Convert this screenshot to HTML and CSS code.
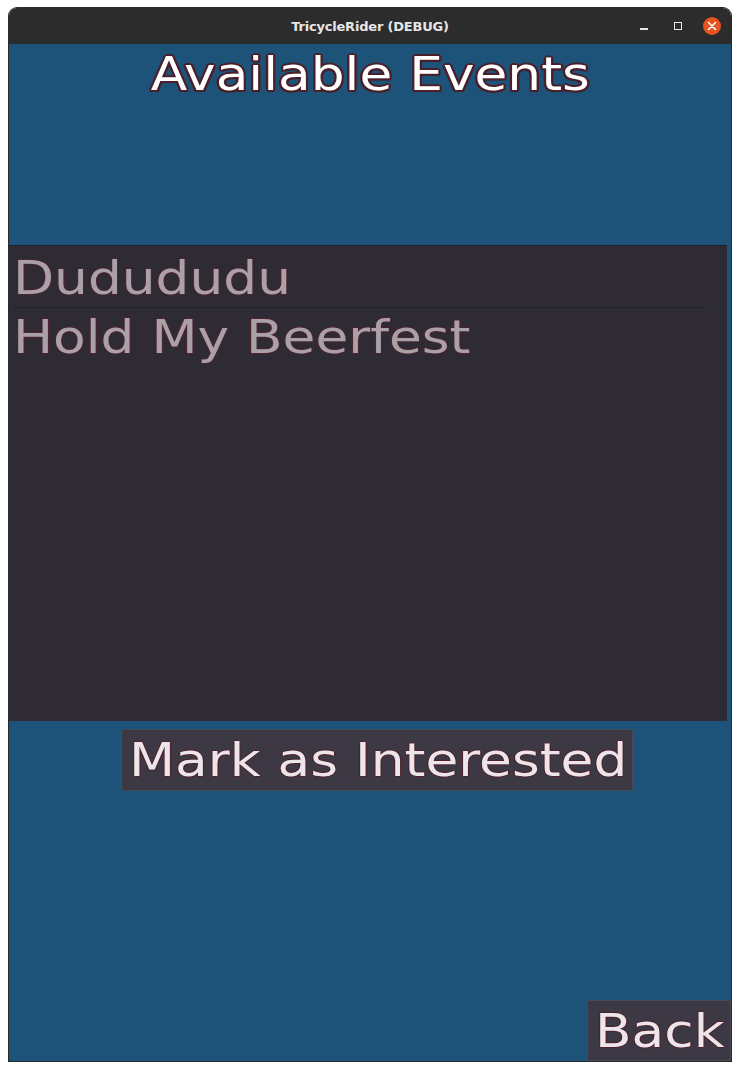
FILE: index.html
```html
<!DOCTYPE html>
<html>
<head>
<meta charset="utf-8">
<link rel="stylesheet" href="styles.css">
</head>
<body>
<div class="window">
  <div class="titlebar">
    <span class="title">TricycleRider (DEBUG)</span>
    <div class="controls">
      <span class="ctl min"></span>
      <span class="ctl max"></span>
      <span class="ctl close">
        <svg width="10" height="10" viewBox="0 0 10 10"><path d="M1.5 1.5L8.5 8.5M8.5 1.5L1.5 8.5" stroke="#fff" stroke-width="1.6" stroke-linecap="round"/></svg>
      </span>
    </div>
  </div>
  <div class="content">
    <header class="header">
      <h1 class="heading"><span class="wide center">Available Events</span></h1>
    </header>
    <div class="list">
      <div class="item"><span class="wide">Dudududu</span></div>
      <div class="sep"></div>
      <div class="item"><span class="wide">Hold My Beerfest</span></div>
    </div>
    <div class="actions">
      <button class="btn mark"><span class="wide">Mark as Interested</span></button>
    </div>
    <div class="footer">
      <button class="btn back"><span class="wide">Back</span></button>
    </div>
  </div>
</div>
</body>
</html>
```

FILE: styles.css
```css
html, body {
  margin: 0;
  padding: 0;
  background: #ffffff;
}
body {
  width: 740px;
  height: 1071px;
  overflow: hidden;
}
.window {
  margin: 8px 0 0 9px;
  width: 722px;
  height: 1053px;
  display: flex;
  flex-direction: column;
  border-radius: 8px 8px 0 0;
  overflow: hidden;
  box-shadow: 0 0 0 1px #2a2a2a;
}
.titlebar {
  height: 36px;
  background: #2c2c2c;
  position: relative;
  display: flex;
  align-items: center;
  justify-content: center;
  flex: none;
}
.title {
  font-family: "DejaVu Sans", "Liberation Sans", sans-serif;
  font-weight: bold;
  font-size: 13px;
  color: #e6e6e6;
  letter-spacing: -0.2px;
}
.controls {
  position: absolute;
  right: 10px;
  top: 0;
  height: 36px;
  display: flex;
  align-items: center;
}
.ctl {
  display: block;
}
.min {
  width: 8px;
  height: 1.5px;
  background: #e6e6e6;
  margin-top: 6px;
}
.max {
  width: 6px;
  height: 6px;
  border: 1px solid #e6e6e6;
  margin-left: 26px;
}
.close {
  width: 18px;
  height: 18px;
  border-radius: 50%;
  background: #e5531f;
  display: flex;
  align-items: center;
  justify-content: center;
  margin-left: 21px;
}
.content {
  flex: 1;
  background: #1d5279;
  display: flex;
  flex-direction: column;
  font-family: "DejaVu Sans", "Verdana", sans-serif;
}
.wide {
  display: inline-block;
  transform: scaleX(1.16);
  transform-origin: left center;
  white-space: nowrap;
}
.wide.center {
  transform-origin: center center;
}
.header {
  height: 201px;
  flex: none;
}
.heading {
  margin: 1px 0 0 0;
  text-align: center;
  font-weight: normal;
  font-size: 46px;
  line-height: 58px;
  color: #ffffff;
  text-shadow:
    -2px 0 0 #4a1f29, 2px 0 0 #4a1f29, 0 -2px 0 #4a1f29, 0 2px 0 #4a1f29,
    -1.5px -1.5px 0 #4a1f29, 1.5px -1.5px 0 #4a1f29, -1.5px 1.5px 0 #4a1f29, 1.5px 1.5px 0 #4a1f29;
}
.list {
  height: 476px;
  margin-right: 4px;
  background: #2e2b34;
  border-top: 1px solid #23222a;
  box-sizing: border-box;
  padding: 3px 0 0 4px;
  flex: none;
}
.item {
  font-size: 46px;
  line-height: 58px;
  height: 58px;
  color: #a9a1a7;
  text-shadow:
    -1px 0 0 #4e2430, 1px 0 0 #4e2430, 0 -1px 0 #4e2430, 0 1px 0 #4e2430;
}
.sep {
  height: 1px;
  background: #24222a;
  margin: 0 22px 0 0;
}
.actions {
  display: flex;
  justify-content: center;
  padding-top: 8px;
  flex: none;
}
.btn {
  font-family: "DejaVu Sans", "Verdana", sans-serif;
  font-size: 46px;
  line-height: 58px;
  height: 62px;
  padding: 0 7px;
  margin: 0;
  background: #3c3944;
  border: 1px solid #4b4955;
  border-radius: 2px;
  color: #ece6ea;
  text-shadow:
    -1px 0 0 #50202c, 1px 0 0 #50202c, 0 -1px 0 #50202c, 0 1px 0 #50202c;
  display: flex;
  align-items: center;
  box-sizing: border-box;
  overflow: visible;
}
.mark {
  width: 512px;
  margin-left: 14px;
}
.footer {
  margin-top: auto;
  display: flex;
  justify-content: flex-end;
}
.back {
  width: 144px;
  height: 61px;
}
```
